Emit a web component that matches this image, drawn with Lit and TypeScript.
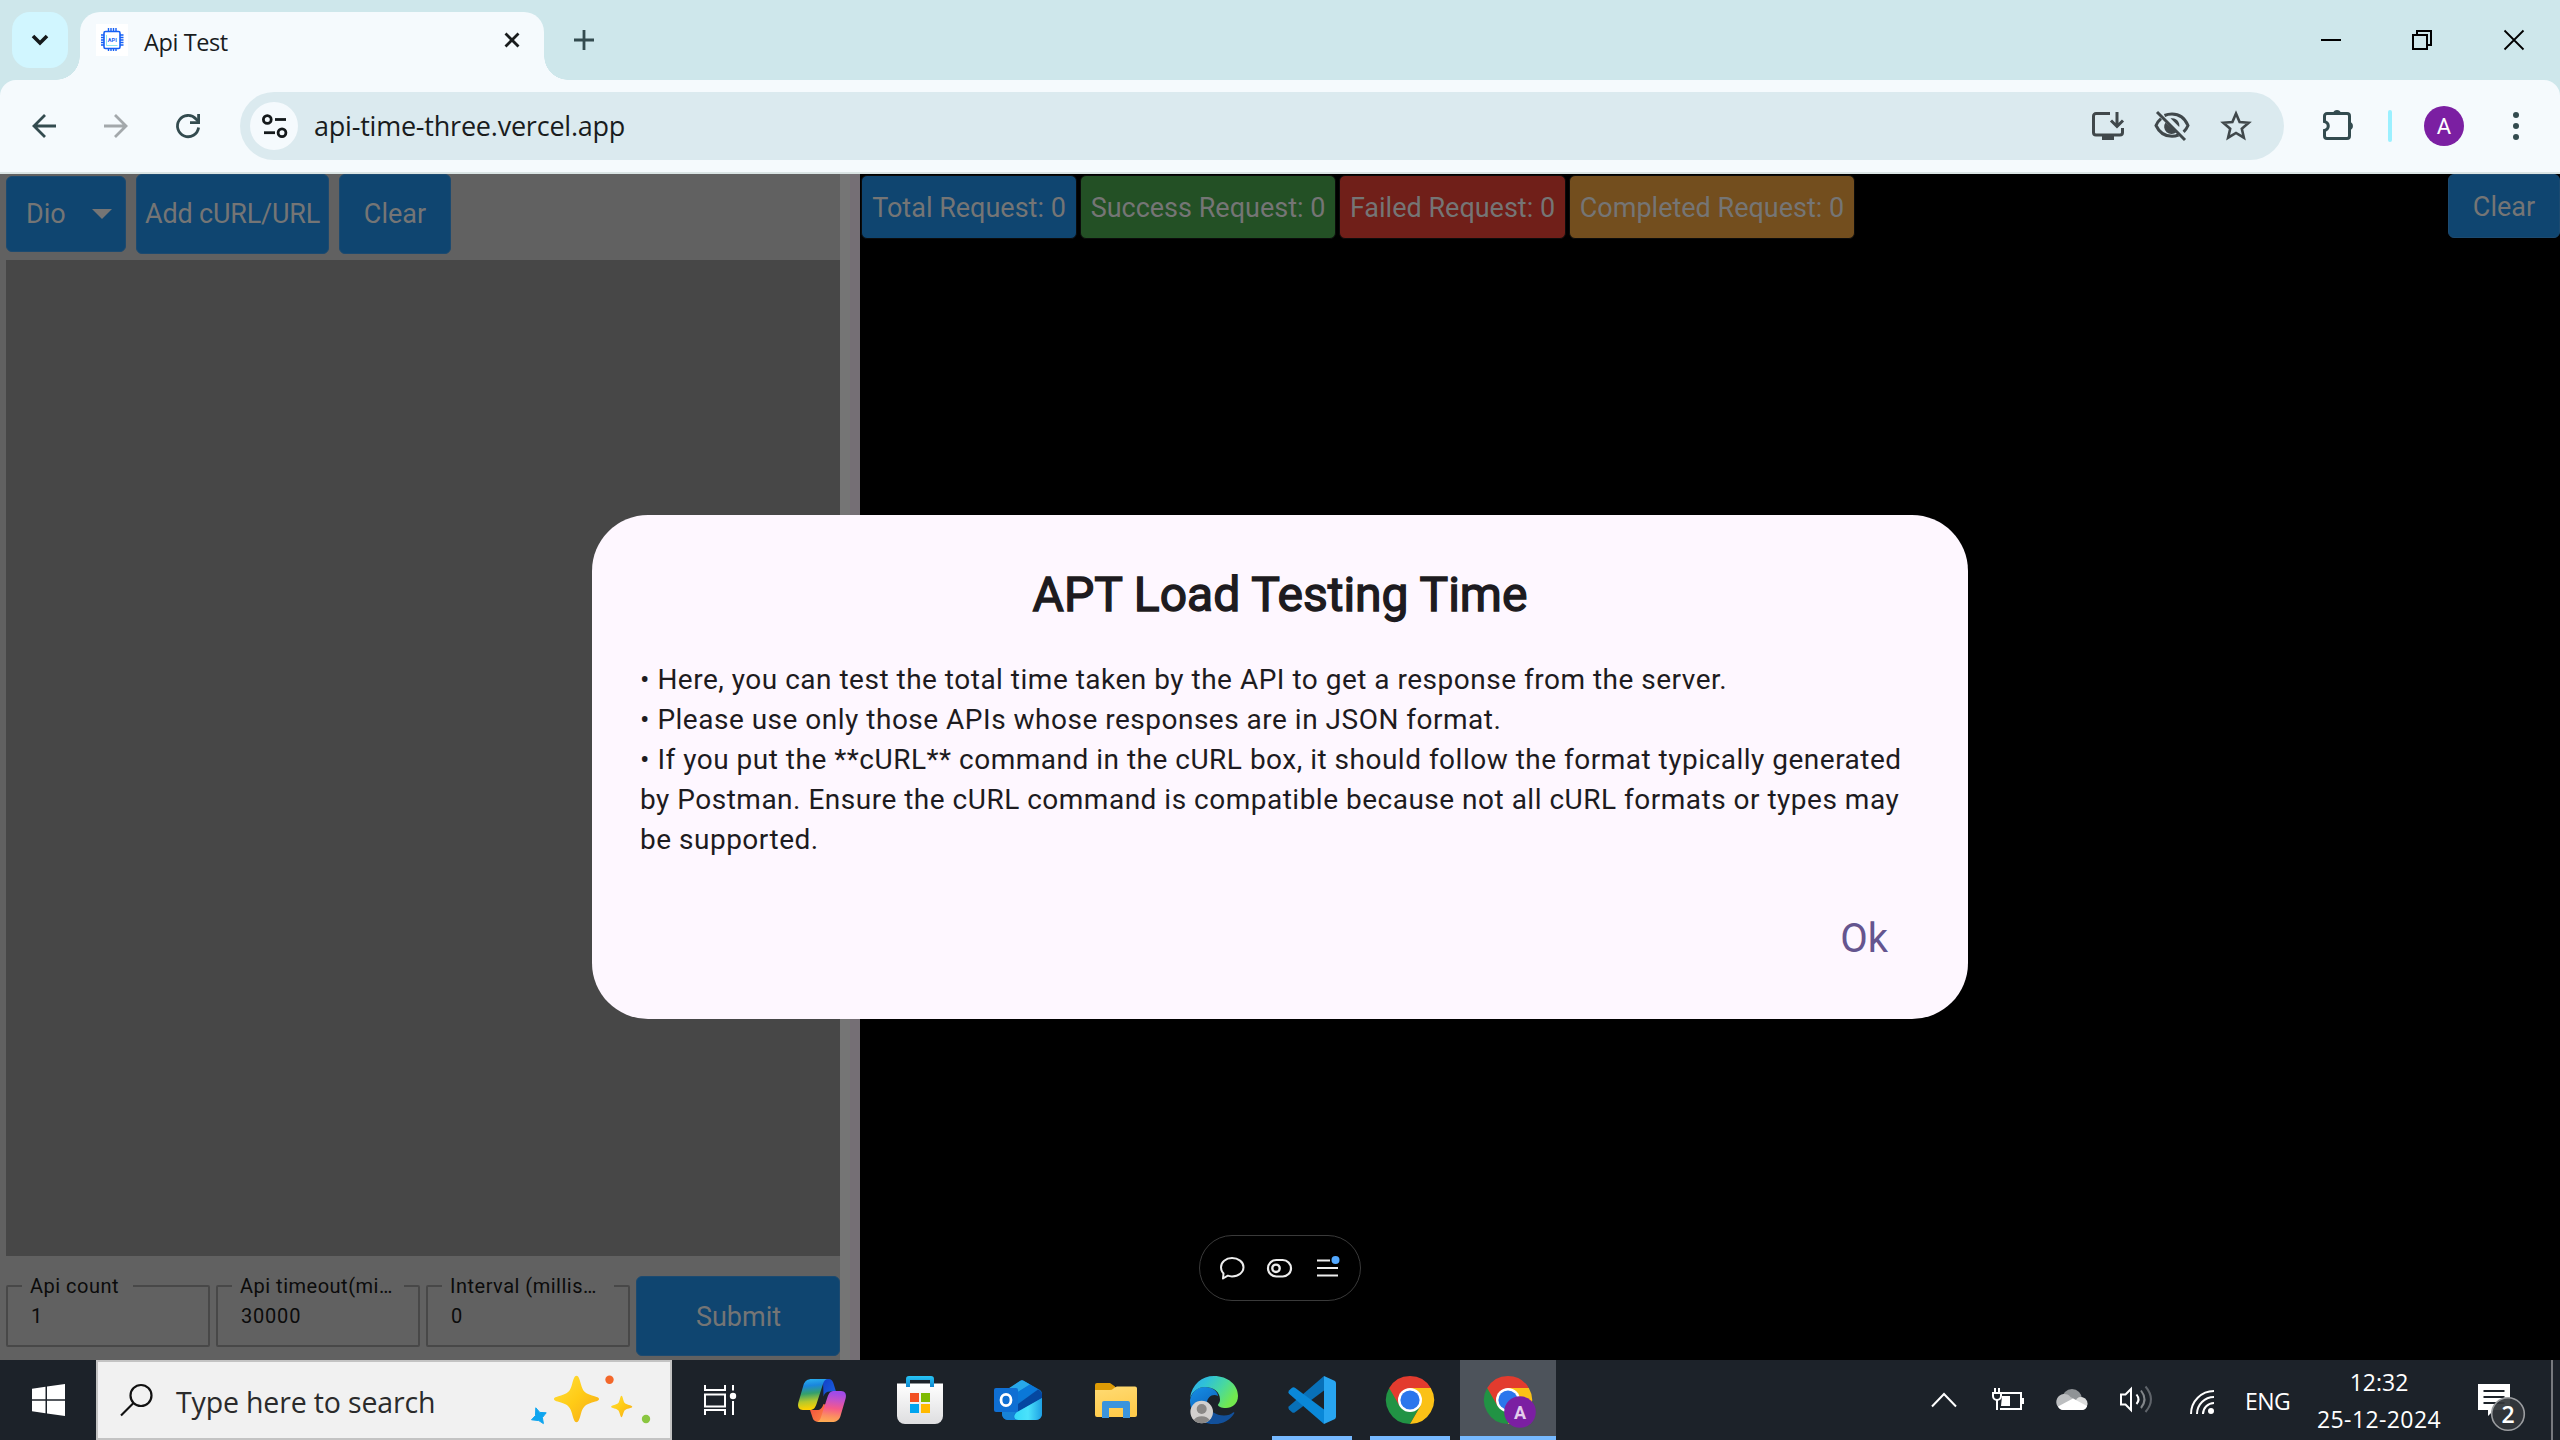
import { LitElement, html, css, svg } from "lit";
import { customElement } from "lit/decorators.js";

const icon = (cls: string, w: number, h: number, body: unknown) =>
  html`<svg class="ic ${cls}" width=${w} height=${h} viewBox="0 0 ${w} ${h}" fill="none">${body}</svg>`;

const base = css`
  * { box-sizing: border-box; }
  .ic { display: block; flex: none; overflow: visible; }
  span { white-space: nowrap; }
`;

@customElement("browser-chrome")
class BrowserChrome extends LitElement {
  static styles = [base, css`
    :host { display: block; background: #cee7eb; font-family: "Open Sans", "Noto Sans", sans-serif; color: #191c1d; }
    .strip { display: flex; height: 80px; padding: 12px 0 0 12px; align-items: flex-start; }
    .search { width: 56px; height: 56px; border-radius: 18px; background: #d1f6ff; display: grid; place-items: center; margin-right: 12px; }
    .tab { position: relative; width: 464px; height: 68px; background: #f5fafd; border-radius: 20px 20px 0 0; display: flex; padding: 12px 24px 0 16px; align-items: flex-start; }
    .tab::before, .tab::after { content: ""; position: absolute; bottom: 0; width: 24px; height: 24px; }
    .tab::before { left: -24px; background: radial-gradient(circle at 0 0, transparent 23.5px, #f5fafd 24px); }
    .tab::after { right: -24px; background: radial-gradient(circle at 100% 0, transparent 23.5px, #f5fafd 24px); }
    .title { font-size: 23.5px; line-height: 34px; margin: 1px 0 0 16px; letter-spacing: -0.4px; }
    .tabx { margin: 8px 0 0 auto; }
    .plus { margin: 18px 0 0 30px; }
    .win { display: flex; margin: 18px 36px 0 auto; gap: 72px; }
    .bar { display: flex; height: 94px; background: #f5fafd; border-bottom: 2px solid #dae4e4; border-radius: 16px 16px 0 0; align-items: center; padding: 0 41px 0 32px; }
    .nav { display: flex; gap: 48px; margin-right: 40px; }
    .omni { width: 2044px; height: 68px; border-radius: 34px; background: #dbeaef; display: flex; align-items: center; padding: 0 32px 0 10px; }
    .site { width: 48px; height: 48px; border-radius: 50%; background: #f5fafd; display: grid; place-items: center; margin-right: 16px; }
    .url { font-size: 27px; line-height: 36px; margin-top: 0; letter-spacing: -0.22px; }
    .oi { display: flex; margin-left: auto; gap: 30px; align-items: center; }
    .puz { margin-left: 39px; margin-top: -4px; }
    .div { width: 4px; height: 32px; border-radius: 2px; background: #9bf0ff; margin-left: 33px; }
    .av { width: 40px; height: 40px; border-radius: 50%; background: #7b1fa2; color: #fff; font: 22px/41px Roboto, sans-serif; text-align: center; margin: 0 auto 0 32px; }
  `];
  render() {
    return html`
      <div class="strip">
        <div class="search">${icon("", 18, 12, svg`<path d="M2 2l7 7 7-7" stroke="#14191b" stroke-width="3.6"/>`)}</div>
        <div class="tab">
          ${icon("", 32, 32, svg`<rect width="32" height="32" fill="#fff"/>
            <rect x="8" y="7.500" width="16" height="17" rx="1.500" stroke="#1560f5" stroke-width="1.600"/>
            <path d="M12.500 4v3.500M15 4v3.500M17.500 4v3.500M20 4v3.500M12.500 24.500V27M15 24.500V27M17.500 24.500V27M20 24.500V27M5 11h3M5 13.500h3M5 16h3M5 18.500h3M5 21h3M24 11h3.500M24 13.500h3.500M24 16h3.500M24 18.500h3.500M24 21h3.500" stroke="#1560f5" stroke-width="1.400"/>
            <path d="M10.500 11v10.500h11" stroke="#8fe6ee" stroke-width="1"/>
            <text x="16.300" y="17.600" text-anchor="middle" font-family="Roboto" font-weight="700" font-size="5.600" fill="#1560f5">API</text>`)}
          <span class="title">Api Test</span>
          ${icon("tabx", 16, 16, svg`<path d="M1.500 1.500l13 13M14.500 1.500l-13 13" stroke="#191c1d" stroke-width="2.800"/>`)}
        </div>
        ${icon("plus", 20, 20, svg`<path d="M10 0v20M0 10h20" stroke="#334b4f" stroke-width="2.800"/>`)}
        <div class="win">
          ${icon("", 20, 20, svg`<path d="M1 10h20" stroke="#000" stroke-width="2"/>`)}
          ${icon("", 20, 20, svg`<path d="M1 5h14v14H1zM5 5V1h14v14h-4" stroke="#000" stroke-width="2"/>`)}
          ${icon("", 20, 20, svg`<path d="M.5.5l19 19M19.500.5l-19 19" stroke="#000" stroke-width="1.800"/>`)}
        </div>
      </div>
      <div class="bar">
        <div class="nav">
          ${icon("", 24, 24, svg`<path d="M24 12H2M13 1L2 12l11 11" stroke="#334b4f" stroke-width="2.800"/>`)}
          ${icon("", 24, 24, svg`<path d="M0 12h22M11 1l11 11-11 11" stroke="#a3a8ab" stroke-width="2.800"/>`)}
          ${icon("", 24, 24, svg`<path d="M22.600 13.500A10.600 10.600 0 1 1 20 5l3 3" stroke="#334b4f" stroke-width="2.800"/><path d="M22.600 0v8.600H14" stroke="#334b4f" stroke-width="2.800"/>`)}
        </div>
        <div class="omni">
          <div class="site">${icon("", 25, 24, svg`<g stroke="#14191b" stroke-width="2.800"><circle cx="5.300" cy="5.500" r="3.900"/><path d="M13 5.500h11"/><circle cx="20" cy="18.700" r="3.900"/><path d="M2 18.700h11"/></g>`)}</div>
          <span class="url">api-time-three.vercel.app</span>
          <div class="oi">
            ${icon("", 32, 28, svg`<path d="M18 1.500H4A2.500 2.500 0 0 0 1.500 4v16.500A2.500 2.500 0 0 0 4 23h24a2.500 2.500 0 0 0 2.500-2.500V16" stroke="#40484b" stroke-width="3"/><path d="M10 23h12v5H10z" fill="#40484b"/><path d="M25 0v14M19 8.500l6 6 6-6" stroke="#40484b" stroke-width="3"/>`)}
            ${icon("", 36, 30, svg`<path d="M10.500 4.500C12.800 3.500 15.300 3 18 3c7.500 0 13 4.500 16 11.500-1 2.400-2.500 4.500-4.400 6.300M24.500 24c-2 .8-4.200 1.300-6.500 1.300-7.500 0-13-4.300-16-10.800 1.200-2.700 2.900-5 5-6.800" stroke="#40484b" stroke-width="3"/><path d="M11.500 11.500a7.300 7.300 0 0 0 11 9.500zM16.500 7.300a7.300 7.300 0 0 1 8.700 8.700z" fill="#40484b"/><path d="M3 1l28 28" stroke="#40484b" stroke-width="3"/>`)}
            ${icon("", 32, 30, svg`<path d="M16 3.500l3.600 8.500 9.100.8-6.900 6 2.100 8.900L16 23l-7.900 4.700 2.100-8.900-6.900-6 9.100-.8z" stroke="#40484b" stroke-width="2.600" transform="translate(0 -1)"/>`)}
          </div>
        </div>
        ${icon("puz", 32, 32, svg`<path d="M1.500 8A2.500 2.500 0 0 1 4 5.500h20A2.500 2.500 0 0 1 26.500 8v20a2.500 2.500 0 0 1-2.500 2.500H4A2.500 2.500 0 0 1 1.500 28v-5.500c2-.3 3.800-2.200 3.800-4.500S3.500 13.800 1.500 13.500z" stroke="#334b4f" stroke-width="3"/><path d="M10 5a4.200 4.200 0 0 1 8 0zM27 14a4.200 4.200 0 0 1 0 8z" fill="#334b4f"/>`)}
        <div class="div"></div>
        <div class="av">A</div>
        ${icon("", 6, 28, svg`<g fill="#334b4f"><circle cx="3" cy="3" r="3"/><circle cx="3" cy="14" r="3"/><circle cx="3" cy="25" r="3"/></g>`)}
      </div>`;
  }
}

const counters = [
  ["total", "Total Request: 0"],
  ["success", "Success Request: 0"],
  ["failed", "Failed Request: 0"],
  ["completed", "Completed Request: 0"],
] as const;

const fields = [
  ["f1", "Api count", "1"],
  ["f2", "Api timeout(mi…", "30000"],
  ["f3", "Interval (millis…", "0"],
] as const;

@customElement("load-page")
class LoadPage extends LitElement {
  static styles = [base, css`
    :host { display: flex; height: 1186px; font-family: Roboto, sans-serif; background: #000; color: #757575; position: relative; }
    .left { width: 840px; background: #616161; display: flex; flex-direction: column; padding-left: 6px; }
    .edge { width: 20px; background: linear-gradient(90deg, #757575 50%, #756f75 50%); }
    .tools { display: flex; height: 86px; align-items: flex-start; }
    .btn { background: #0f4570; border-radius: 6px; font-size: 27px; display: flex; align-items: center; justify-content: center; border: 1px solid #1c4a70; }
    .drop { width: 120px; height: 76px; margin: 2px 10px 0 0; justify-content: space-between; padding: 0 13px 0 19px; }
    .add { width: 193px; height: 80px; margin-right: 10px; letter-spacing: -0.2px; }
    .clr { width: 112px; height: 80px; }
    .area { flex: 1; background: #474747; }
    .form { height: 104px; display: flex; gap: 6px; padding-top: 20px; align-items: flex-start; }
    .field { width: 204px; height: 73px; margin: -2px 0 0; padding: 0 0 0 14px; border: 2px solid #484848; border-radius: 2px; font-size: 20px; color: #0b0b0b; min-width: 0; letter-spacing: 0.5px; }
    .field legend { padding: 0 0 0 8px; line-height: 24px; height: 24px; }
    .f1 legend { width: 111px; }
    .f2 legend, .f3 legend { width: 172px; }
    .val { display: block; padding-left: 9px; line-height: 24px; margin-top: 6px; letter-spacing: 0.8px; }
    .submit { width: 204px; height: 80px; padding: 1px 0 0 1px; }
    .right { flex: 1; display: flex; align-items: flex-start; padding-left: 1px; gap: 3px; }
    .chip { height: 64px; margin-top: 1px; padding-top: 1px; border-radius: 6px; font-size: 27px; display: grid; place-items: center; border: 1px solid #0b0b0b; }
    .total { background: #0f4570; width: 216px; }
    .success { background: #235025; width: 256px; }
    .failed { background: #701f19; width: 227px; }
    .completed { background: #734e1e; width: 286px; }
    .rc { width: 112px; height: 64px; margin-left: auto; padding-top: 1px; }
    .pill { position: absolute; left: 1199px; top: 1061px; width: 162px; height: 66px; border: 1px solid #3a3a3a; border-radius: 33px; background: #000; display: flex; align-items: center; justify-content: space-between; padding: 0 20px 0 19px; }
    .dlg { position: absolute; left: 592px; top: 341px; width: 1376px; height: 504px; border-radius: 56px; background: #fef7ff; color: #1d1b20; padding: 48px 48px 0; display: flex; flex-direction: column; }
    .h { font-size: 48px; line-height: 64px; text-align: center; -webkit-text-stroke: 1.4px #1d1b20; }
    .body { margin-top: 33px; font-size: 28px; line-height: 40px; letter-spacing: 0.5px; }
    .body span { display: block; width: max-content; }
    .ok { align-self: flex-end; color: #65558f; font-size: 40px; line-height: 56px; margin: 51px 32px 0 0; }
  `];
  render() {
    return html`
      <div class="left">
        <div class="tools">
          <div class="btn drop"><span>Dio</span>${icon("", 20, 10, svg`<path d="M0 0h20L10 10z" fill="#757575"/>`)}</div>
          <div class="btn add"><span>Add cURL/URL</span></div>
          <div class="btn clr"><span>Clear</span></div>
        </div>
        <div class="area"></div>
        <div class="form">
          ${fields.map(([c, l, v]) => html`<fieldset class="field ${c}"><legend><span>${l}</span></legend><span class="val">${v}</span></fieldset>`)}
          <div class="btn submit"><span>Submit</span></div>
        </div>
      </div>
      <div class="edge"></div>
      <div class="right">
        ${counters.map(([c, t]) => html`<div class="chip ${c}"><span>${t}</span></div>`)}
        <div class="btn rc"><span>Clear</span></div>
      </div>
      <div class="pill">
        ${icon("", 26, 24, svg`<path d="M4.500 17.500A9.500 9.500 0 0 1 2 11.200C2 6 6.800 2 13 2s11.500 4 11.500 9.200-4.800 9.200-11.500 9.200c-1.500 0-3-.2-4.200-.7L4 22.500z" stroke="#ededed" stroke-width="2" stroke-linejoin="round"/>`)}
        ${icon("", 25, 18, svg`<rect x="0" y="1" width="23" height="16.500" rx="8.250" stroke="#ededed" stroke-width="2.200"/><circle cx="8" cy="9.300" r="3.700" stroke="#ededed" stroke-width="2.400"/>`)}
        ${icon("", 24, 20, svg`<path d="M1 2.500h13M1 10h21M1 17.500h21" stroke="#ededed" stroke-width="2"/><circle cx="19.500" cy="2" r="4" fill="#52a8ff"/>`)}
      </div>
      <div class="dlg">
        <div class="h"><span>APT Load Testing Time</span></div>
        <div class="body">
          <span>• Here, you can test the total time taken by the API to get a response from the server.</span>
          <span>• Please use only those APIs whose responses are in JSON format.</span>
          <span>• If you put the **cURL** command in the cURL box, it should follow the format typically generated</span>
          <span>by Postman. Ensure the cURL command is compatible because not all cURL formats or types may</span>
          <span>be supported.</span>
        </div>
        <div class="ok"><span>Ok</span></div>
      </div>`;
  }
}

const grad = (id: string, x2: number, y2: number, ...stops: string[]) => svg`<linearGradient id=${id} x1="0" y1="0" x2=${x2} y2=${y2}>
  ${stops.map((c, i) => svg`<stop offset=${i / (stops.length - 1)} stop-color=${c}/>`)}</linearGradient>`;

const chromeLogo = svg`
  <path d="M24 48A24 24 0 0 1 3.200 12L24 24l10.400 6z" fill="#219344"/>
  <path d="M24 12h20.800A24 24 0 0 1 24 48l10.400-18z" fill="#fbc116"/>
  <path d="M3.200 12A24 24 0 0 1 44.800 12H24L13.600 30z" fill="#e33b2e"/>
  <circle cx="24" cy="24" r="12" fill="#fff"/><circle cx="24" cy="24" r="9.600" fill="#2b76ec"/>`;

@customElement("task-bar")
class TaskBar extends LitElement {
  static styles = [base, css`
    :host { display: flex; height: 80px; background: #1c2229; color: #fff; font-family: "Open Sans", "Noto Sans", sans-serif; }
    .start { width: 96px; display: grid; place-items: center; }
    .find { width: 576px; border: 2px solid #c3c3c3; background: #f1f1f1; display: flex; align-items: center; padding-left: 22px; color: #2b2b2b; }
    .ph { font-size: 28.5px; letter-spacing: -0.16px; margin: 4px 0 0 23px; }
    .spark { margin: 0 20px 0 auto; }
    .app { width: 98px; height: 80px; display: grid; place-items: center; border-bottom: 4px solid transparent; padding-top: 4px; }
    .view { width: 96px; margin-right: 5px; }
    .run { width: 80px; margin: 0 9px; border-color: #76b9ff; }
    .act { width: 96px; border-color: #76b9ff; background: #4d535b; margin-left: 1px; }
    .tray { margin-left: auto; display: flex; align-items: center; }
    .tray .ic + .ic { margin-left: 32px; }
    .tray .bat.ic { margin-left: 35px; }
    .tray .wifi.ic { margin-left: 38px; }
    .lang { font-size: 23px; line-height: 32px; width: 46px; letter-spacing: -0.5px; margin: 2px 26px 0 31px; }
    .clock { display: flex; flex-direction: column; align-items: center; font-size: 23px; line-height: 37px; width: 124px; padding-top: 1px; }
    .date { letter-spacing: 0.4px; }
    .note { margin-left: 37px; }
    .show { width: 2px; height: 80px; background: #777a7e; margin: 0 7px 0 25px; }
  `];
  render() {
    return html`
      <div class="start">${icon("", 33, 32, svg`<path d="M0 4.700L13.500 2.700v12.500H0zM15 2.500L33 0v15.200H15zM0 16.800h13.500v12.500L0 27.300zM15 16.800h18V32l-18-2.500z" fill="#fff"/>`)}</div>
      <div class="find">
        ${icon("", 33, 32, svg`<circle cx="21" cy="11.500" r="10.500" stroke="#111" stroke-width="2.200"/><path d="M13.500 19L1 31.500" stroke="#111" stroke-width="2.200"/>`)}
        <span class="ph">Type here to search</span>
        ${icon("spark", 120, 50, svg`<defs>${grad("g", 1, 1, "#ffe03d", "#ffcb16", "#f5a81c")}</defs>
          <path d="M46.500.7c2 0 3 3 4.500 8.800 1.600 6 3.600 8.400 9 10.300 5.500 2 9 2.300 9 4.200s-3.500 2.400-9 4.200c-5.400 1.900-7.400 4.400-9 10.300-1.500 5.700-2.500 8.700-4.500 8.700s-3-3-4.500-8.700c-1.600-5.900-3.600-8.400-9-10.300-5.500-1.800-9-2.300-9-4.200s3.500-2.200 9-4.200c5.400-1.900 7.400-4.300 9-10.300C43.500 3.700 44.500.7 46.500.7z" fill="url(#g)"/>
          <path d="M91.500 20.700c1.300 0 1.600 5 3 7.100s7.800 2.500 7.800 3.900-6.400 1.800-7.800 3.900-1.700 6.600-3 6.600-1.600-4.500-3-6.600-7.400-2.500-7.400-3.900 6-1.800 7.400-3.900 1.700-7.100 3-7.100z" fill="url(#g)"/>
          <path d="M5.800 32.800l4 4.600 6.400.4-3.800 4.800 1 6-4.600-3-7.300-.8 4-4.200z" fill="#0ea5ef" stroke="#0ea5ef" stroke-width="1" stroke-linejoin="round"/>
          <circle cx="79.500" cy="4.700" r="4.200" fill="#f3672a"/><circle cx="116" cy="44" r="4.200" fill="#8ac640"/>`)}
      </div>
      <div class="app view">${icon("", 32, 30, svg`<path d="M1 0v5h20V0M1 30v-5h20v5M1 9.500h20v12H1z" stroke="#fff" stroke-width="2"/><path d="M29 0v5.500M29 16v14" stroke="#fff" stroke-width="2"/><circle cx="29" cy="11" r="3.200" fill="#fff"/>`)}</div>
      <div class="app">${icon("", 48, 43, svg`<defs>${grad("c1", 0.1, 1, "#2cb5f2", "#1a86dd", "#35a06c", "#b5c82c", "#ffd100")}${grad("c2", -0.1, 1, "#a04be8", "#c852c4", "#f5598a", "#fb8d62", "#ffb34e")}${grad("c3", 1, 1, "#1140c8", "#1b62e0")}${grad("c4", 1, 1, "#f04a3c", "#ff8a44")}</defs>
        <path d="M25 0h5c3.500 0 4.700 2 5.500 4.500l2.500 8h-6c-3.500 0-5.500 1.500-6.500 5z" fill="url(#c3)"/>
        <path d="M12 31h7c3.500 0 5-2 6.500-6l3 1-6.500 17c-4 0-6.500-1-7.500-4.500z" fill="url(#c4)"/>
        <path d="M14 0h16c-2.500 0-4 1.500-5 5l-6.500 20c-1.500 4.500-3.500 6-7 6H5c-4 0-5.800-3-4.600-7.500L5.500 6C6.800 2 9.500 0 14 0z" fill="url(#c1)"/>
        <path d="M34 43H18c2.500 0 4-1.500 5-5l6.500-20c1.500-4.500 3.500-6 7-6H43c4 0 5.800 3 4.600 7.500L42.500 37c-1.300 4-4 6-8.500 6z" fill="url(#c2)"/>`)}</div>
      <div class="app">${icon("", 46, 48, svg`<defs>${grad("s1", 0, 1, "#ffffff", "#dedee0")}${grad("s2", 0, 1, "#27c6f7", "#0e86cf")}</defs>
        <path d="M0 7.500h46V40a8 8 0 0 1-8 8H8a8 8 0 0 1-8-8z" fill="url(#s1)"/>
        <path d="M9 11V3a3 3 0 0 1 3-3h22a3 3 0 0 1 3 3v8h-4V4H13v7z" fill="url(#s2)"/>
        <path d="M13 17h9v9h-9z" fill="#f25022"/><path d="M24 17h9v9h-9z" fill="#7fba00"/><path d="M13 28h9v9h-9z" fill="#00a4ef"/><path d="M24 28h9v9h-9z" fill="#ffb900"/>`)}</div>
      <div class="app">${icon("", 48, 40, svg`<defs>${grad("o1", 1, 0, "#35d8f8", "#4be2fb", "#1fa0e4")}</defs>
        <path d="M8 14L26 1q2-1.500 4 0l16 9q2 1.500 2 4v20a6 6 0 0 1-6 6H14a6 6 0 0 1-6-6z" fill="#0f78d0"/>
        <path d="M9 12L26 1q2-1.500 4 0l6 3.500L12 20z" fill="#28a8ea"/>
        <path d="M36 4.500l8 5L22 24V13z" fill="#0a78d8"/>
        <path d="M44 9.500q4 2 4 5.500v3L24 32v-8z" fill="#0547a0"/>
        <path d="M48 18v16a6 6 0 0 1-6 6H24c-5 0-5-6 0-8.500z" fill="url(#o1)"/>
        <path d="M8 32h14c-4 3-2 8 2 8H14a6 6 0 0 1-6-6z" fill="#1783d8"/>
        <rect y="8" width="24" height="24" rx="2" fill="#0f6fd3"/>
        <ellipse cx="12" cy="20" rx="5" ry="5.600" stroke="#fff" stroke-width="2.800"/>`)}</div>
      <div class="app">${icon("", 42, 35, svg`<defs>${grad("f1", 0.3, 1, "#ffdb74", "#ffcb4c")}</defs>
        <path d="M0 2a2 2 0 0 1 2-2h13l5 3.500V10H0z" fill="#dd9b05"/>
        <path d="M0 7h15q2 0 3.500-1.500T22 3.500h18a2 2 0 0 1 2 2V32a2 2 0 0 1-2 2H2a2 2 0 0 1-2-2z" fill="url(#f1)"/>
        <path d="M7 35V20a2 2 0 0 1 2-2h24a2 2 0 0 1 2 2v15h-7V25H14v10z" fill="#3a94dd"/>`)}</div>
      <div class="app">${icon("", 48, 48, svg`<defs>${grad("e1", 1, 0.5, "#2fa8f0", "#2fc0d8", "#48d8a0", "#72e84e")}${grad("e2", 0.5, 1, "#1590e8", "#0c59b0")}</defs>
        <path d="M0 24C2 15 8 11 15 11c8 0 13 5 13 9-5-3-11 1-11 7 0 8 6 15 15 19-2 1.300-5 2-8 2C10 48 0 38 0 24z" fill="url(#e2)"/>
        <path d="M18 26c0 9 8 13.500 16 13.500 4 0 7-1.200 9-3 1.200-.7 1.700.2 1 1.200C40 44 33 48 25 48c-8 0-13-8-12-15z" fill="#12509a"/>
        <path d="M0 22C2 8 12 0 24 0c14 0 24 9 24 20 0 8-6 12-12 12-5 0-8-1.500-8-3 0-1 2-2 2-5.500C30 16 24 11 15 11 8 11 3 15 0 22z" fill="url(#e1)"/>
        <circle cx="11.700" cy="36" r="11.300" fill="#d2d0ce"/><circle cx="11.700" cy="33" r="5" fill="#8a8886"/><path d="M3.800 44a8.500 6 0 0 1 15.800 0 11.300 11.300 0 0 1-15.800 0z" fill="#8a8886"/>`)}</div>
      <div class="app run">${icon("", 48, 48, svg`
        <path d="M36 0v14.500L7 36.200q-1.500 1-3 0L1 33.500q-1.500-1.700 0-3.200z" fill="#0870b8"/>
        <path d="M36 48V33.500L7 11.800q-1.500-1-3 0L1 14.500q-1.500 1.700 0 3.200z" fill="#0a88d8"/>
        <path d="M36 0l10.500 4.800q1.500.7 1.500 2.400v33.600q0 1.700-1.500 2.400L36 48z" fill="#28a5f0"/>`)}</div>
      <div class="app run">${icon("", 48, 48, chromeLogo)}</div>
      <div class="app act">${icon("", 48, 48, svg`${chromeLogo}<circle cx="36" cy="36" r="15.800" fill="#7b1fa2"/><text x="36" y="42.500" text-anchor="middle" font-family="Roboto" font-weight="700" font-size="18" fill="#e4cdec">A</text>`)}</div>
      <div class="tray">
        ${icon("", 26, 32, svg`<path d="M1 22.500L13 10l12 12.500" stroke="#fff" stroke-width="2"/>`)}
        ${icon("bat", 32, 32, svg`<path d="M10 9h19v16H8" stroke="#fff" stroke-width="2"/><path d="M30 14h2v6h-2zM10 12h8v10H9z" fill="#fff"/><path d="M3 4v4M7 4v4M1 9h8v3a4 4 0 0 1-8 0zM5 16v10" stroke="#fff" stroke-width="2"/>`)}
        ${icon("", 32, 32, svg`<circle cx="16" cy="15" r="10" fill="#8f9396"/><path d="M8 26a8 8 0 1 1 6.500-13L22 17l-8 9z" fill="#bcbec0"/><path d="M21 14.500A6.500 6.500 0 1 1 26 26l-8-7z" fill="#dcdddd"/><path d="M2 22.500L17 14.500l14 7.500a5.500 5.500 0 0 1-5 4H7a6 6 0 0 1-5-3.500z" fill="#fff"/>`)}
        ${icon("", 32, 32, svg`<path d="M1 10.500h4.500L11 5v21l-5.500-5.500H1z" stroke="#fff" stroke-width="2"/><path d="M16.500 10.500q4 5 0 9.500" stroke="#fff" stroke-width="2"/><path d="M21 6.500q7 9 0 17.500" stroke="#82868a" stroke-width="2"/><path d="M25.500 2.500q11 13 0 25.500" stroke="#5f646a" stroke-width="2"/>`)}
        ${icon("wifi", 24, 32, svg`<path d="M1 30A23 23 0 0 1 24 7M7 30A17 17 0 0 1 24 13M13 30A11 11 0 0 1 24 19" stroke="#fff" stroke-width="2"/><circle cx="21" cy="27" r="3" fill="#fff"/>`)}
        <span class="lang">ENG</span>
        <div class="clock"><span>12:32</span><span class="date">25-12-2024</span></div>
        ${icon("note", 48, 32, svg`<path d="M0 0h32v26H16l-6 6v-6H0z" fill="#fff"/><path d="M5.500 7h21M5.500 13h21M5.500 19h21" stroke="#1c2229" stroke-width="2"/><circle cx="30" cy="30" r="16.300" fill="#32363a" fill-opacity=".93" stroke="#9b9da0" stroke-width="1.600"/><text x="30" y="38.500" text-anchor="middle" font-family="Open Sans" font-weight="600" font-size="23" fill="#fff">2</text>`)}
        <div class="show"></div>
      </div>`;
  }
}

@customElement("app-root")
class AppRoot extends LitElement {
  static styles = css`:host { display: flex; flex-direction: column; width: 2560px; height: 1440px; overflow: hidden; }`;
  render() {
    return html`<browser-chrome></browser-chrome><load-page></load-page><task-bar></task-bar>`;
  }
}
